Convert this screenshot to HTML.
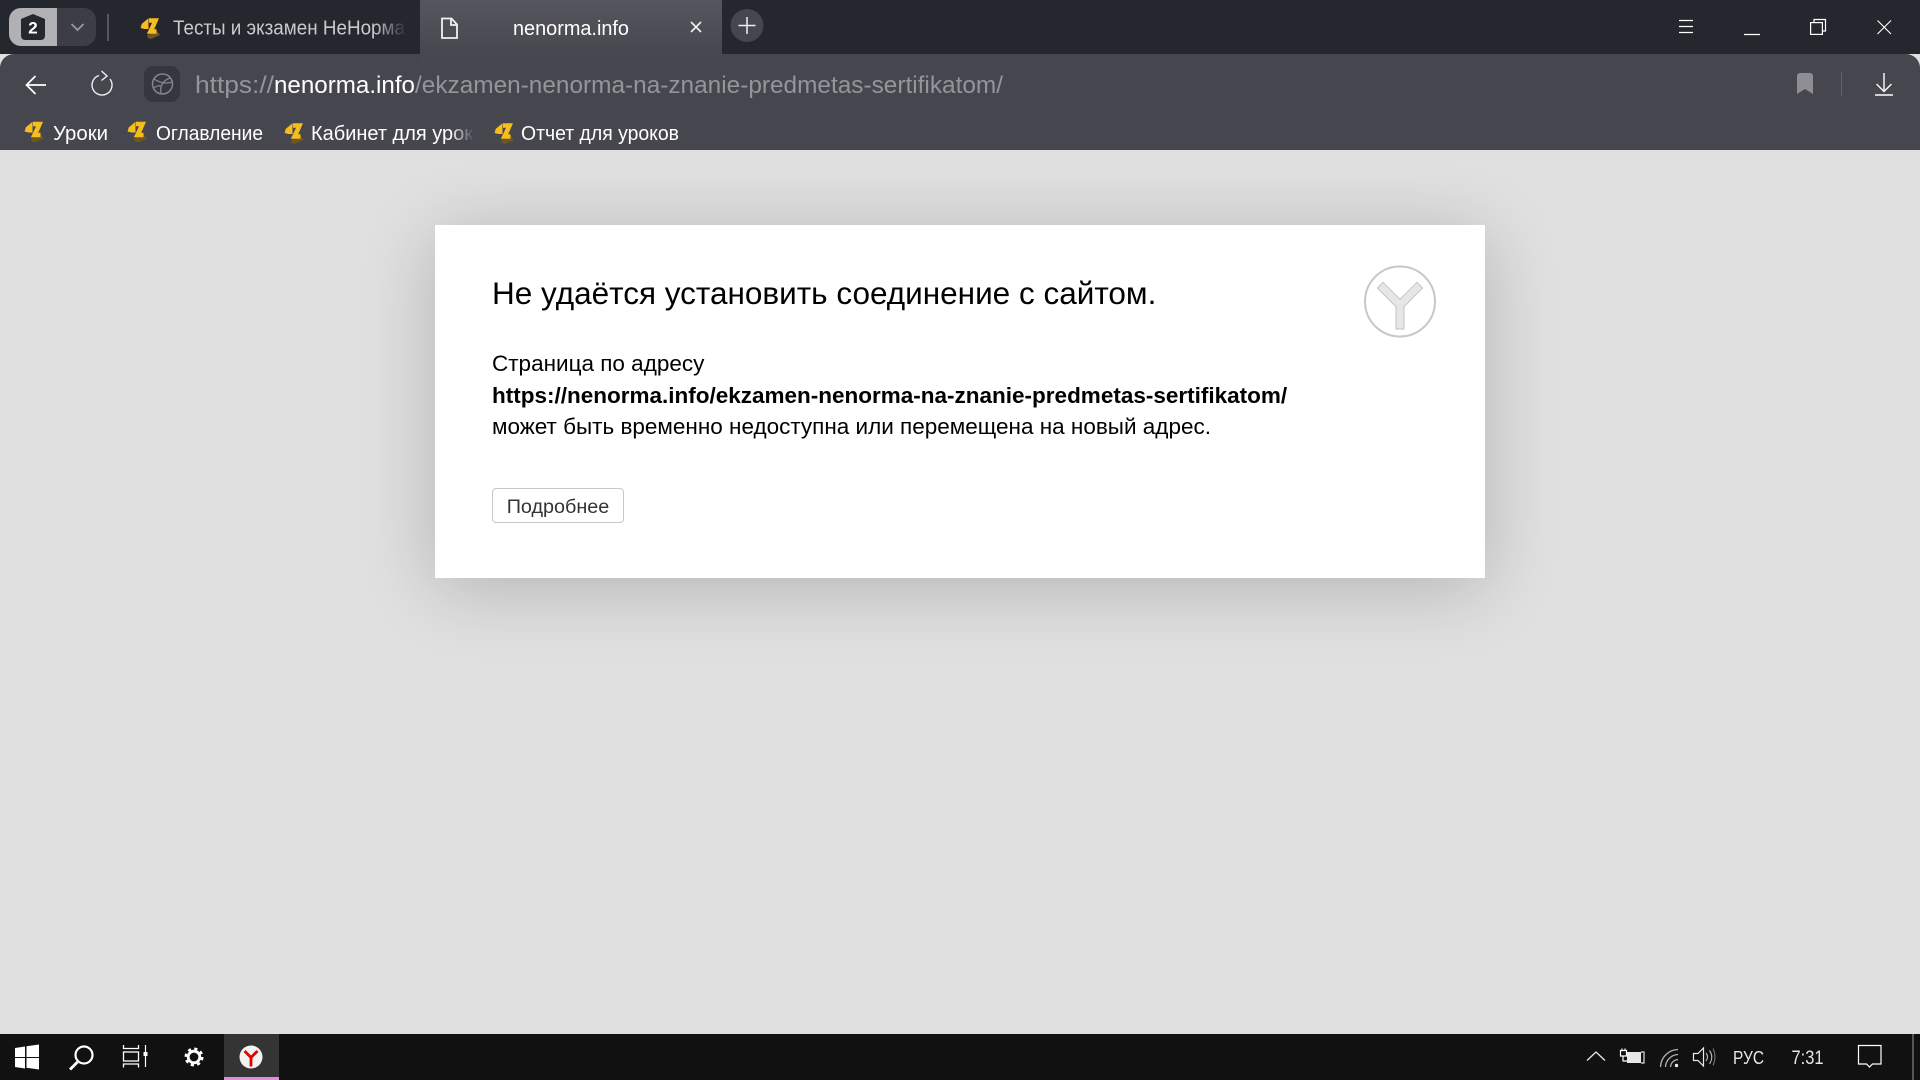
<!DOCTYPE html>
<html lang="ru"><head><meta charset="utf-8"><title>nenorma.info</title>
<style>
html,body{margin:0;padding:0;width:1920px;height:1080px;overflow:hidden;background:#e0e0e0;font-family:"Liberation Sans",Arial,sans-serif}
#chrome{position:absolute;left:0;top:0}
#card{position:absolute;left:435px;top:225px;width:1050px;height:353px;background:#fff;box-shadow:0 10px 70px rgba(0,0,0,.2)}
#card div,#card h1{position:absolute;left:57px;margin:0;white-space:nowrap;color:#000;font-weight:normal}
#h{top:47px;font-size:31.5px;line-height:42px}
.l{font-size:22.5px;line-height:32px}
#btn{left:57px!important;top:263px;width:130px;height:33px;border:1.5px solid #c8c8c8;border-radius:4px;text-align:center;font-size:19.8px;line-height:36px;color:#333!important}
</style></head><body>
<svg id="chrome" width="1920" height="1080" viewBox="0 0 1920 1080" font-family="'Liberation Sans',Arial,sans-serif">
<defs>
<linearGradient id="tab" x1="0" y1="0" x2="0" y2="1"><stop offset="0" stop-color="#565660"/><stop offset="1" stop-color="#47474f"/></linearGradient>
<linearGradient id="f1" x1="0" x2="1"><stop offset="0" stop-color="#25272f" stop-opacity="0"/><stop offset="1" stop-color="#25272f"/></linearGradient>
<linearGradient id="f2" x1="0" x2="1"><stop offset="0" stop-color="#46464f" stop-opacity="0"/><stop offset="1" stop-color="#46464f"/></linearGradient>
<g id="fav">
<path d="M8 18l10-4 3 4-9 4-3-1z" fill="#6f5724"/>
<path d="M3.500 11.500L4.500 8 7.500 5.500 7.500 12" fill="none" stroke="#f6bd1c" stroke-width="4"/>
<path d="M10 3.500H16.500L15 7 11.500 14.500H17.500" fill="none" stroke="#f6bd1c" stroke-width="4.600"/>
</g>
</defs>
<rect width="1920" height="54" fill="#25272f"/>
<path d="M0 150V68a14 14 0 0 1 14-14H1906a14 14 0 0 1 14 14V150z" fill="#46464f"/>
<rect x="420" y="0" width="302" height="54" fill="url(#tab)"/>
<rect x="420" y="54" width="302" height="14" fill="#47474f"/>
<!-- tab counter -->
<rect x="9" y="8" width="87" height="38" rx="12" fill="#3c3d47"/>
<path d="M21 8H57V46H21a12 12 0 0 1-12-12V20a12 12 0 0 1 12-12z" fill="#b1b0b4"/>
<path d="M33 14l12 5v17a4 4 0 0 1-4 4H25a4 4 0 0 1-4-4V19z" fill="#25272f"/>
<text x="33" y="33.500" font-size="17" font-weight="bold" fill="#fff" text-anchor="middle">2</text>
<path d="M71.500 24l6 6 6-6" fill="none" stroke="#9b9ca3" stroke-width="1.700"/>
<rect x="107" y="14" width="2" height="27" fill="#565760"/>
<!-- tab 1 -->
<use href="#fav" x="139" y="17"/>
<text x="173" y="34.500" font-size="20.500" fill="#c9cacd" textLength="232" lengthAdjust="spacingAndGlyphs">Тесты и экзамен НеНорма</text>
<rect x="375" y="10" width="32" height="34" fill="url(#f1)"/>
<!-- active tab -->
<path d="M442 18.500h9.500l5.500 6v13.500h-15z M451 18.500v6.500h6" fill="none" stroke="#f0f0f2" stroke-width="1.800"/>
<text x="513" y="35" font-size="20.500" fill="#fff" textLength="116" lengthAdjust="spacingAndGlyphs">nenorma.info</text>
<path d="M691 22l10 10M701 22l-10 10" stroke="#f0f0f2" stroke-width="1.600" fill="none"/>
<circle cx="747" cy="25.500" r="16.500" fill="#45464f"/>
<path d="M747 17v17M738.500 25.500h17" stroke="#f0f0f2" stroke-width="1.500" fill="none"/>
<!-- window controls -->
<path d="M1679 20.500h14M1679 26.500h14M1679 32.500h14M1744 34.500h16" stroke="#fff" stroke-width="1.200" fill="none"/>
<rect x="1810.600" y="22.600" width="11.800" height="11.800" fill="none" stroke="#fff" stroke-width="1.200"/>
<path d="M1814 22.500v-3h11.500v11.500h-3" fill="none" stroke="#fff" stroke-width="1.200"/>
<path d="M1877.500 20.500l13.500 13.500M1891 20.500l-13.500 13.500" stroke="#fff" stroke-width="1.100" fill="none"/>
<!-- nav -->
<path d="M46 85H27M35.500 76l-9 9 9 9" fill="none" stroke="#fff" stroke-width="1.700"/>
<path d="M99 75.500A10 10 0 1 0 110 79" fill="none" stroke="#f0f0f2" stroke-width="1.400"/>
<path d="M101.500 71l5.500 5-5.500 4.500" fill="none" stroke="#f0f0f2" stroke-width="1.400"/>
<rect x="144" y="66" width="36" height="36" rx="9" fill="#35363f"/>
<circle cx="162.500" cy="84" r="10" fill="none" stroke="#85868c" stroke-width="1.500"/>
<path d="M154 79Q163 85 172 82M170 78Q159 82 161 94M153.500 88Q158 85 161 86" fill="none" stroke="#85868c" stroke-width="1.300"/>
<text y="93" font-size="24.500" fill="#94959b"><tspan x="195" textLength="79" lengthAdjust="spacingAndGlyphs">https://</tspan></text>
<text y="93" font-size="24.500" fill="#fff"><tspan x="274" textLength="141" lengthAdjust="spacingAndGlyphs">nenorma.info</tspan></text>
<text y="93" font-size="24.500" fill="#94959b"><tspan x="415" textLength="588" lengthAdjust="spacingAndGlyphs">/ekzamen-nenorma-na-znanie-predmetas-sertifikatom/</tspan></text>
<path d="M1797 76a3 3 0 0 1 3-3h10a3 3 0 0 1 3 3v18l-8-5-8 5z" fill="#8e8e94"/>
<rect x="1841" y="72" width="1" height="24" fill="#62626b"/>
<path d="M1884 73v18M1876.500 84l7.500 7.500 7.500-7.500" fill="none" stroke="#f2f2f2" stroke-width="1.500"/>
<path d="M1875 95h18" stroke="#fff" stroke-width="1.600"/>
<!-- bookmarks -->
<use href="#fav" x="23" y="120.500"/>
<text x="53" y="140" font-size="20.500" fill="#fff" textLength="55" lengthAdjust="spacingAndGlyphs">Уроки</text>
<use href="#fav" x="126" y="120.500"/>
<text x="156" y="140" font-size="20.500" fill="#fff" textLength="107" lengthAdjust="spacingAndGlyphs">Оглавление</text>
<use href="#fav" x="283" y="122"/>
<text x="311" y="140" font-size="20.500" fill="#fff" textLength="162" lengthAdjust="spacingAndGlyphs">Кабинет для урок</text>
<rect x="450" y="120" width="24" height="28" fill="url(#f2)"/>
<use href="#fav" x="493" y="122"/>
<text x="521" y="140" font-size="20.500" fill="#fff" textLength="158" lengthAdjust="spacingAndGlyphs">Отчет для уроков</text>
<!-- taskbar -->
<rect y="1034" width="1920" height="46" fill="#111"/>
<rect x="224" y="1034" width="55" height="46" fill="#343434"/>
<rect x="224" y="1077" width="55" height="3" fill="#e58ad8"/>
<path d="M15 1048l10-1.500v10.500h-10zM26.500 1046.300l12.500-1.800v12.500h-12.500zM15 1058h10v10.500l-10-1.500zM26.500 1058h12.500v11.500l-12.500-1.800z" fill="#fff"/>
<circle cx="84" cy="1055" r="8.500" fill="none" stroke="#fff" stroke-width="2.200"/>
<path d="M77.500 1062l-7.500 7.500" stroke="#fff" stroke-width="2.800"/>
<path d="M123.500 1045v3.500h15V1045M123.500 1067.500v-3.500h15v3.500" fill="none" stroke="#fff" stroke-width="1.300"/>
<rect x="123.500" y="1052" width="15" height="9" fill="none" stroke="#fff" stroke-width="1.300"/>
<path d="M145.500 1045v22" stroke="#fff" stroke-width="1.200"/><rect x="143.500" y="1052" width="4" height="4" fill="#fff"/>
<circle cx="194" cy="1057" r="5.800" fill="none" stroke="#fff" stroke-width="2.800"/>
<circle cx="194" cy="1057" r="8.300" fill="none" stroke="#fff" stroke-width="2.400" stroke-dasharray="3.200 3.320"/>
<circle cx="251" cy="1057" r="11.500" fill="#f2f2f2"/>
<path d="M244.500 1051l6.500 6.500 6.500-6.500M251 1057.500v9" fill="none" stroke="#e00000" stroke-width="2.800"/>
<path d="M1587 1060.500l9-8.500 9 8.500" fill="none" stroke="#e8e8e8" stroke-width="1.300"/>
<path d="M1622 1050v-1.500M1625 1050v-1.500" stroke="#fff" stroke-width="1.200"/>
<path d="M1620.500 1050.500h6v5.500h-6zM1623 1056v5h4" fill="none" stroke="#fff" stroke-width="1.200"/>
<rect x="1627" y="1052" width="14" height="11" fill="#e8e8e8"/><path d="M1641 1052h3v11h-3" fill="none" stroke="#ddd" stroke-width="1.200"/>
<path d="M1660.500 1067A18 18 0 0 1 1678 1049.500M1665.500 1067A13 13 0 0 1 1678 1054.500M1670.500 1067A8 8 0 0 1 1678 1059.500" fill="none" stroke="#b4b4b4" stroke-width="1.300"/>
<circle cx="1676.500" cy="1065.500" r="1.700" fill="#e8e8e8"/>
<path d="M1693.500 1053.500h4.500l5.500-5.500v18l-5.500-5.500h-4.500z" fill="none" stroke="#e8e8e8" stroke-width="1.200"/>
<path d="M1706 1053Q1709 1057 1706 1061M1709.500 1050.500Q1714 1057 1709.500 1064" fill="none" stroke="#bdbdbd" stroke-width="1.100"/>
<path d="M1713 1048.500Q1717 1057 1713 1065.500" fill="none" stroke="#777" stroke-width="1"/>
<text x="1733" y="1064" font-size="18.500" fill="#e8e8e8" textLength="31" lengthAdjust="spacingAndGlyphs">РУС</text>
<text x="1791.500" y="1064" font-size="19" fill="#e8e8e8" textLength="32" lengthAdjust="spacingAndGlyphs">7:31</text>
<path d="M1858.500 1045.500h22.500v18.500h-8.500l-3 3-3-3h-8z" fill="none" stroke="#fff" stroke-width="1.200"/>
<rect x="1912" y="1034" width="2" height="46" fill="#555"/>
</svg>
<div id="card">
<h1 id="h">Не удаётся установить соединение с сайтом.</h1>
<div class="l" style="top:123px">Страница по адресу</div>
<div class="l" style="top:155px;font-weight:bold">https://nenorma.info/ekzamen-nenorma-na-znanie-predmetas-sertifikatom/</div>
<div class="l" style="top:186px">может быть временно недоступна или перемещена на новый адрес.</div>
<div id="btn">Подробнее</div>
<svg style="position:absolute;left:925px;top:36px" width="80" height="80" viewBox="0 0 80 80">
<circle cx="40" cy="40.500" r="35" fill="#fff" stroke="#c8c8c8" stroke-width="2"/>
<path d="M23 27L40 44L57 27M40 44V64" fill="none" stroke="#c4c4c4" stroke-width="9" stroke-linecap="square" stroke-linejoin="miter"/>
<path d="M23 27L40 44L57 27M40 44V64" fill="none" stroke="#e6e6e6" stroke-width="7" stroke-linecap="square" stroke-linejoin="miter"/>
</svg>
</div>
</body></html>
